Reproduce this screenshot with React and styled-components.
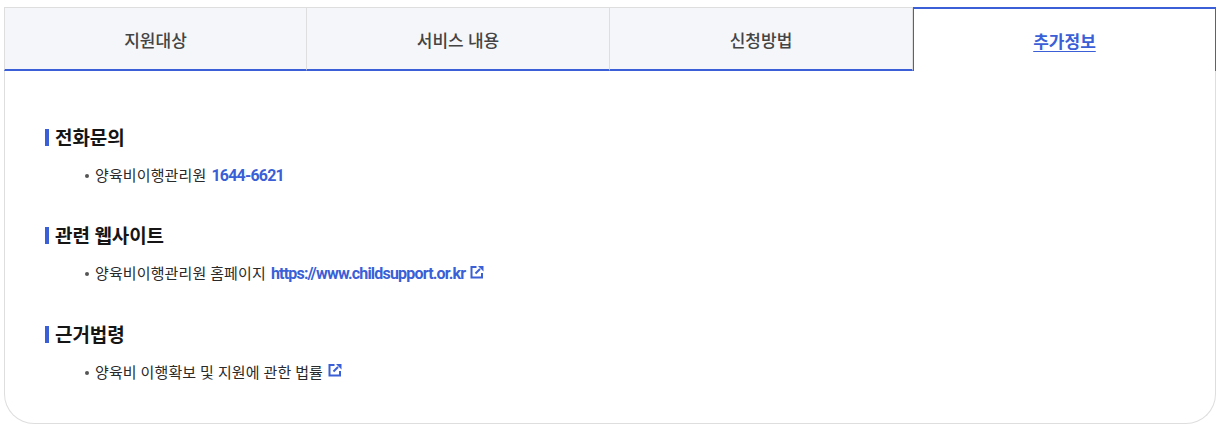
import React from "react";
import styled, { createGlobalStyle } from "styled-components";

const GlobalStyle = createGlobalStyle`
  html, body {
    margin: 0;
    padding: 0;
    background: #fff;
  }
  body {
    font-family: Roboto, "Noto Sans CJK KR", sans-serif;
  }
`;

const Wrapper = styled.div`
  width: 1212px;
  padding: 7px 0 0 4px;
`;

const TabList = styled.ul`
  display: flex;
  margin: 0;
  padding: 0;
  list-style: none;
`;

const Tab = styled.li`
  flex: 0 0 25%;
  height: 64px;
  box-sizing: border-box;
  display: flex;
  align-items: center;
  justify-content: center;
  padding-top: ${(props) => (props.$active ? "0" : "1px")};
  font-size: 17px;
  font-weight: ${(props) => (props.$active ? 700 : 500)};
  color: ${(props) => (props.$active ? "#3a5fd6" : "#444")};
  text-decoration: ${(props) => (props.$active ? "underline" : "none")};
  text-underline-offset: 3px;
  background: ${(props) => (props.$active ? "#fff" : "#f5f6fa")};
  border-style: solid;
  border-color: ${(props) => (props.$active ? "#3a5fd6" : "#dedede")};
  border-width: ${(props) => (props.$active ? "2px 1px 0 1px" : "1px 1px 0 0")};
  border-bottom: ${(props) => (props.$active ? "0" : "2px solid #3a5fd6")};
  &:first-child {
    border-left: 1px solid #dedede;
  }
`;

const Panel = styled.div`
  box-sizing: border-box;
  height: 353px;
  padding: 55.5px 40px 0;
  border: 1px solid #dedede;
  border-top: 0;
  border-radius: 0 0 30px 30px;
`;

const Section = styled.section`
  margin-bottom: 38.5px;
`;

const Heading = styled.h3`
  display: flex;
  align-items: center;
  gap: 6px;
  margin: 0 0 14px;
  font-size: 19px;
  line-height: 24px;
  font-weight: 700;
  color: #151515;
  letter-spacing: -0.1px;
  &::before {
    content: "";
    width: 4px;
    height: 17px;
    margin-bottom: 3px;
    background: #3a5fd6;
  }
`;

const Item = styled.div`
  display: flex;
  align-items: center;
  padding-left: 40px;
  font-size: 15px;
  line-height: 22px;
  letter-spacing: 0.12px;
  color: #2a2a2a;
  &::before {
    content: "";
    width: 4px;
    height: 4px;
    border-radius: 50%;
    background: #555;
    margin-right: 6px;
  }
`;

const Accent = styled.a`
  margin-left: 5px;
  color: #3a5fd6;
  font-size: 16px;
  font-weight: 700;
  letter-spacing: -0.8px;
`;

const LinkIcon = styled.svg`
  width: 14px;
  height: 14px;
  margin: -5px 0 0 5px;
`;

const ExternalIcon = () => (
  <LinkIcon viewBox="0 0 14 14" fill="none" stroke="#3a5fd6" strokeWidth="2">
    <path d="M6.5 2H1.5v10.5h10.5V8" />
    <path d="M5.5 8.5 10 4" />
    <path d="M8 1h5.5v5.5z" fill="#3a5fd6" stroke="none" />
  </LinkIcon>
);

const tabs = ["지원대상", "서비스 내용", "신청방법", "추가정보"];

export default function App() {
  return (
    <Wrapper>
      <GlobalStyle />
      <TabList>
        {tabs.map((tab, i) => (
          <Tab key={tab} $active={i === 3}>
            {tab}
          </Tab>
        ))}
      </TabList>
      <Panel>
        <Section>
          <Heading>전화문의</Heading>
          <Item>
            양육비이행관리원<Accent>1644-6621</Accent>
          </Item>
        </Section>
        <Section>
          <Heading>관련 웹사이트</Heading>
          <Item>
            양육비이행관리원 홈페이지<Accent>https://www.childsupport.or.kr</Accent>
            <ExternalIcon />
          </Item>
        </Section>
        <Section>
          <Heading>근거법령</Heading>
          <Item>
            양육비 이행확보 및 지원에 관한 법률
            <ExternalIcon />
          </Item>
        </Section>
      </Panel>
    </Wrapper>
  );
}
